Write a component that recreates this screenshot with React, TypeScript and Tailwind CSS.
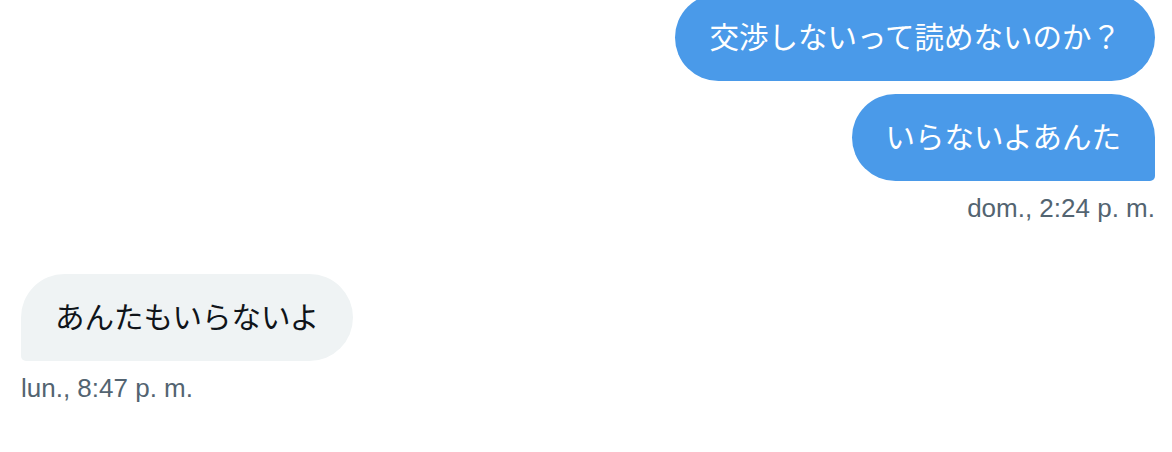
import React from "react";

// Conversación de mensajes directos
type Mensaje = {
  texto: string;
  propio: boolean;
  ultimo?: boolean;
};

const fuente = {
  fontFamily: '"Liberation Sans", "Noto Sans CJK JP", sans-serif',
};

const Burbuja = ({ texto, propio, ultimo }: Mensaje) => {
  const base =
    "h-[87px] flex items-center px-[34px] text-[29.5px] leading-none rounded-[43.5px] whitespace-nowrap";
  const color = propio
    ? "bg-[#4a9ae9] text-white"
    : "bg-[#eff3f4] text-[#0f1419]";
  const esquina = ultimo
    ? propio
      ? "rounded-br-[5px]"
      : "rounded-bl-[5px]"
    : "";
  return <div className={`${base} ${color} ${esquina}`}>{texto}</div>;
};

const Hora = ({ texto }: { texto: string }) => (
  <p className="text-[26px] leading-none text-[#536471] mt-[14px]">{texto}</p>
);

export default function App() {
  return (
    <div
      className="w-[1172px] h-[452px] bg-white overflow-hidden pr-[17px] pl-[21px]"
      style={fuente}
    >
      {/* Mensajes enviados */}
      <div className="flex flex-col items-end -mt-[6px]">
        <Burbuja texto="交渉しないって読めないのか？" propio />
        <div className="mt-[13px]">
          <Burbuja texto="いらないよあんた" propio ultimo />
        </div>
        <Hora texto="dom., 2:24 p. m." />
      </div>

      {/* Mensaje recibido */}
      <div className="flex flex-col items-start mt-[53px]">
        <Burbuja texto="あんたもいらないよ" propio={false} ultimo />
        <Hora texto="lun., 8:47 p. m." />
      </div>
    </div>
  );
}
